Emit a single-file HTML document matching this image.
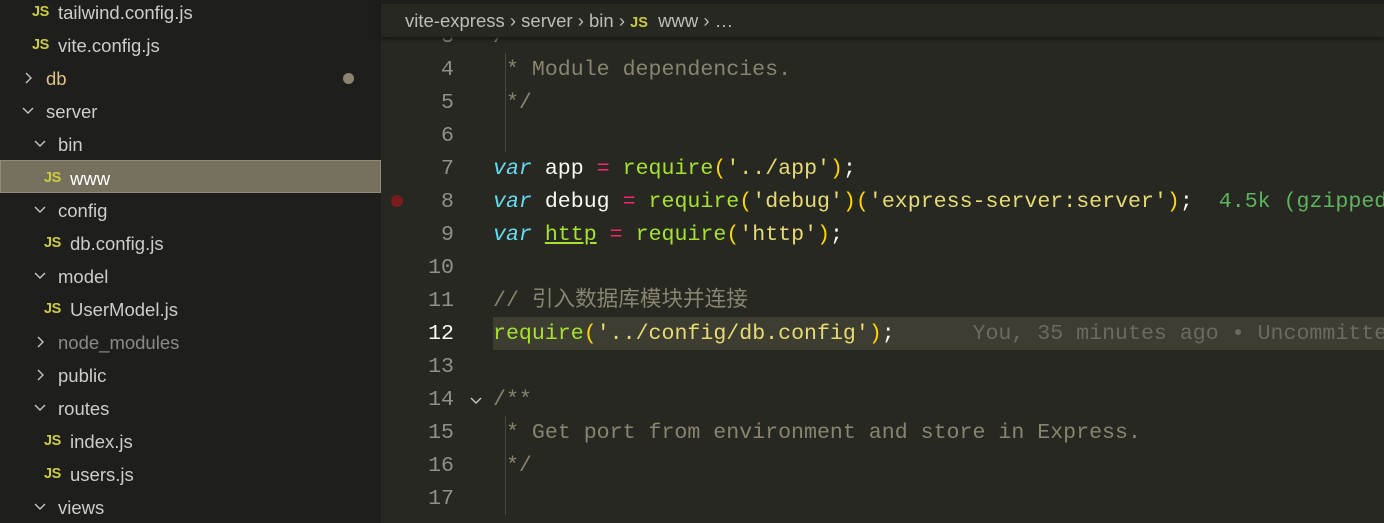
<!DOCTYPE html>
<html><head><meta charset="utf-8"><style>
*{margin:0;padding:0;box-sizing:border-box}
body{width:1384px;height:523px;overflow:hidden;background:#272822;position:relative;font-family:"Liberation Sans","Noto Sans CJK SC",sans-serif}
#side{position:absolute;left:0;top:0;width:381px;height:523px;background:#1e1f1c;overflow:hidden}
.row{position:absolute;left:0;width:381px;height:33px;line-height:35px;font-size:18.5px;color:#cccccc}
.js{position:absolute;font-weight:bold;font-size:14.5px;color:#cbcb41;letter-spacing:-0.5px;top:0}
.chev{position:absolute;top:10px}
.sel{background:#75715e;border:1px solid #8f8b78}
#crumb{position:absolute;left:381px;top:0;width:1003px;height:37px;background:#272822;box-shadow:0 2px 4px #151512;z-index:2;font-size:18.5px;color:#bdbdb5;line-height:42px;padding-left:24px;overflow:hidden}
#tabs{position:absolute;left:381px;top:0;width:1003px;height:4px;background:#1e1f1c;z-index:3}
.code{position:absolute;left:381px;width:1003px;height:33px;line-height:35px;font-family:"Liberation Mono","Noto Sans CJK SC",monospace;font-size:21.6px;color:#f8f8f2;white-space:pre;overflow:hidden}
.ln{position:absolute;left:0;width:73px;text-align:right;color:#90908a}
.tx{position:absolute;left:112px}
.c{color:#88846f}.k{color:#66d9ef;font-style:italic}.f{color:#a6e22e}.s{color:#e6db74}.o{color:#f92672}.p{color:#ffd700}
.guide{position:absolute;left:505px;width:1px;background:#464741}
</style></head><body>
<svg width="0" height="0" style="position:absolute"><defs>
<symbol id="dn" viewBox="0 0 14 14"><path d="M2 4 L7 9 L12 4" fill="none" stroke="#c5c5c5" stroke-width="1.4"/></symbol>
<symbol id="rt" viewBox="0 0 14 14"><path d="M4 2 L9 7 L4 12" fill="none" stroke="#c5c5c5" stroke-width="1.4"/></symbol>
</defs></svg>
<div id="side">
<div class="row" style="top:-5px"><span class="js" style="left:32px">JS</span><span style="position:absolute;left:58px">tailwind.config.js</span></div>
<div class="row" style="top:28px"><span class="js" style="left:32px">JS</span><span style="position:absolute;left:58px">vite.config.js</span></div>
<div class="row" style="top:61px"><svg class="chev" style="left:22px" width="14" height="14"><use href="#rt"/></svg><span style="position:absolute;left:46px;color:#e2c08d">db</span><span style="position:absolute;left:343px;top:12px;width:11px;height:11px;border-radius:50%;background:#8d8470"></span></div>
<div class="row" style="top:94px"><svg class="chev" style="left:21px" width="14" height="14"><use href="#dn"/></svg><span style="position:absolute;left:46px">server</span></div>
<div class="row" style="top:127px"><svg class="chev" style="left:33px" width="14" height="14"><use href="#dn"/></svg><span style="position:absolute;left:58px">bin</span></div>
<div class="row sel" style="top:160px"><span class="js" style="left:43px">JS</span><span style="position:absolute;left:69px;color:#fff">www</span></div>
<div class="row" style="top:193px"><svg class="chev" style="left:33px" width="14" height="14"><use href="#dn"/></svg><span style="position:absolute;left:58px">config</span></div>
<div class="row" style="top:226px"><span class="js" style="left:44px">JS</span><span style="position:absolute;left:70px">db.config.js</span></div>
<div class="row" style="top:259px"><svg class="chev" style="left:33px" width="14" height="14"><use href="#dn"/></svg><span style="position:absolute;left:58px">model</span></div>
<div class="row" style="top:292px"><span class="js" style="left:44px">JS</span><span style="position:absolute;left:70px">UserModel.js</span></div>
<div class="row" style="top:325px"><svg class="chev" style="left:34px" width="14" height="14"><use href="#rt"/></svg><span style="position:absolute;left:58px;color:#8a8a85">node_modules</span></div>
<div class="row" style="top:358px"><svg class="chev" style="left:34px" width="14" height="14"><use href="#rt"/></svg><span style="position:absolute;left:58px">public</span></div>
<div class="row" style="top:391px"><svg class="chev" style="left:33px" width="14" height="14"><use href="#dn"/></svg><span style="position:absolute;left:58px">routes</span></div>
<div class="row" style="top:424px"><span class="js" style="left:44px">JS</span><span style="position:absolute;left:70px">index.js</span></div>
<div class="row" style="top:457px"><span class="js" style="left:44px">JS</span><span style="position:absolute;left:70px">users.js</span></div>
<div class="row" style="top:490px"><svg class="chev" style="left:33px" width="14" height="14"><use href="#dn"/></svg><span style="position:absolute;left:58px">views</span></div>
</div>
<div id="tabs"></div>
<div id="crumb">vite-express › server › bin › <span style="color:#cbcb41;font-weight:bold;font-size:14.5px">JS</span>&nbsp; www › …</div>
<div class="guide" style="top:53px;height:99px"></div>
<div class="guide" style="top:416px;height:99px"></div>
<div style="position:absolute;left:493px;top:317px;width:891px;height:33px;background:#3e3d32"></div>
<div style="position:absolute;left:391px;top:195px;width:12px;height:12px;border-radius:50%;background:#7a1c1c"></div>
<div class="code" style="top:20px"><span class="ln">3</span><span class="tx c">/</span></div>
<div class="code" style="top:53px"><span class="ln">4</span><span class="tx c"> * Module dependencies.</span></div>
<div class="code" style="top:86px"><span class="ln">5</span><span class="tx c"> */</span></div>
<div class="code" style="top:119px"><span class="ln">6</span></div>
<div class="code" style="top:152px"><span class="ln">7</span><span class="tx"><span class="k">var</span> app <span class="o">=</span> <span class="f">require</span><span class="p">(</span><span class="s">'../app'</span><span class="p">)</span>;</span></div>
<div class="code" style="top:185px"><span class="ln">8</span><span class="tx"><span class="k">var</span> debug <span class="o">=</span> <span class="f">require</span><span class="p">(</span><span class="s">'debug'</span><span class="p">)(</span><span class="s">'express-server:server'</span><span class="p">)</span>;  <span style="color:#5fb35f">4.5k (gzipped)</span></span></div>
<div class="code" style="top:218px"><span class="ln">9</span><span class="tx"><span class="k">var</span> <span class="f" style="text-decoration:underline">http</span> <span class="o">=</span> <span class="f">require</span><span class="p">(</span><span class="s">'http'</span><span class="p">)</span>;</span></div>
<div class="code" style="top:251px"><span class="ln">10</span></div>
<div class="code" style="top:284px"><span class="ln">11</span><span class="tx c">// 引入数据库模块并连接</span></div>
<div class="code" style="top:317px"><span class="ln" style="color:#f8f8f2">12</span><span class="tx"><span class="f">require</span><span class="p">(</span><span class="s">'../config/db.config'</span><span class="p">)</span>;      <span style="color:#6b6a60">You, 35 minutes ago • Uncommitted</span></span></div>
<div class="code" style="top:350px"><span class="ln">13</span></div>
<div class="code" style="top:383px"><span class="ln">14</span><svg style="position:absolute;left:88px;top:11px" width="14" height="14"><use href="#dn"/></svg><span class="tx c">/**</span></div>
<div class="code" style="top:416px"><span class="ln">15</span><span class="tx c"> * Get port from environment and store in Express.</span></div>
<div class="code" style="top:449px"><span class="ln">16</span><span class="tx c"> */</span></div>
<div class="code" style="top:482px"><span class="ln">17</span></div>
</body></html>
